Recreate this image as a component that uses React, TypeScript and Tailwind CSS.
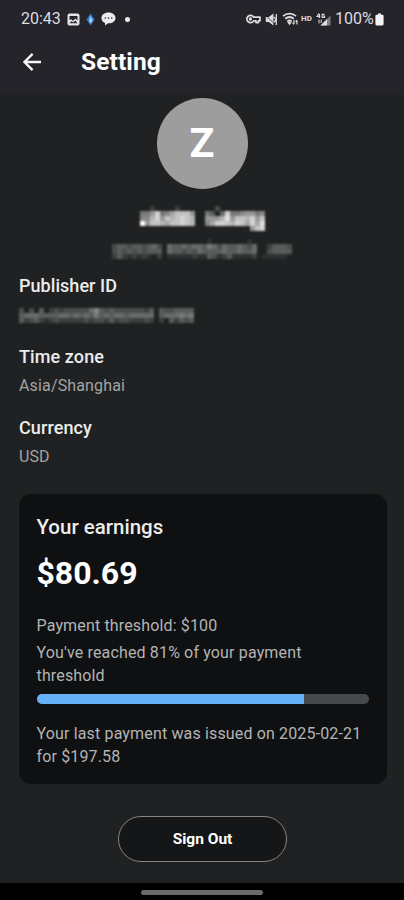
import React from 'react';

const EARNINGS = 80.69;
const THRESHOLD = 100;

// Brightness of each block as a hex digit, one string per row
const NAME_ROWS = [
    '0020000200000003000000000',
    '668c679bbb8006405c6678867',
    '77ac8babcba00888ad8bbac8b',
    'f8bba9bbcba0079ccbacb9c9d',
    '00000000000000000000008bc',
];

const EMAIL_ROWS = [
    '000000000000000000010000000100000000',
    '344344345305445455465354454350024443',
    '343434344405443435444454454450034444',
    '242121210201111121143124111120111110',
];

const PUBLISHER_ROWS = [
    '30304023233333574343333332404334444',
    '45554444554545464545545555504555656',
    '42342123222223233242332223202042434',
];

const Mosaic: React.FC<{ rows: string[]; cell: number; className?: string }> = ({ rows, cell, className }) => {
    const width = rows[0].length * cell;
    const height = rows.length * cell;
    return (
        <svg width={width} height={height} viewBox={`0 0 ${width} ${height}`} className={className} aria-hidden="true">
            {rows.map((row, y) =>
                row.split('').map((level, x) => (
                    <rect
                        key={`${x}-${y}`}
                        x={x * cell}
                        y={y * cell}
                        width={cell}
                        height={cell}
                        fill="#fff"
                        fillOpacity={parseInt(level, 16) / 15}
                    />
                ))
            )}
        </svg>
    );
};

const StatusBar: React.FC = () => (
    <div className="flex h-[38px] items-center justify-between pl-[21px] pr-[20px] text-[#dcdce0]">
        <div className="flex items-center">
            <span className="w-[46px] text-[16px] leading-none">20:43</span>
            {/* Picture */}
            <svg width="13" height="13" viewBox="0 0 13 13" className="mr-[5px]">
                <rect x="0.5" y="0.5" width="12" height="12" rx="2" fill="#e4e4e6" />
                <path d="M2.5 7V3h8v4.5L8.3 5.6 6 7.9 4.3 6.2z" fill="#25242a" />
                <path d="M2.5 10.2 4.5 8.2l1.6 1.4 2.3-2.2 2.1 2.8z" fill="#25242a" />
            </svg>
            {/* App notification */}
            <svg width="9" height="13" viewBox="0 0 9 13" className="mr-[6px] ml-[1px]">
                <path d="M4.5 0.5 8.5 6.5 4.5 12.5 0.5 6.5z" fill="#2f7fd6" />
                <path d="M4.5 3 6.8 7.5 4.5 10.5 3 7.5z" fill="#a5cdf5" />
            </svg>
            {/* Message */}
            <svg width="15" height="14" viewBox="0 0 15 14" className="mr-[9px]">
                <path d="M7.5 0.5C3.5 0.5 0.5 2.8 0.5 6s2 4.3 3.5 5v2.4l3-2.1h0.8c3.8 0 6.7-2.2 6.7-5.3S11.5 0.5 7.5 0.5z" fill="#ececee" />
                <circle cx="4.3" cy="6" r="0.8" fill="#25242a" />
                <circle cx="7.5" cy="6" r="0.8" fill="#25242a" />
                <circle cx="10.7" cy="6" r="0.8" fill="#25242a" />
            </svg>
            <span className="h-[5px] w-[5px] rounded-full bg-[#ececee]" />
        </div>

        <div className="flex items-center">
            {/* VPN key */}
            <svg width="15" height="10" viewBox="0 0 15 10" className="mr-[4px]" fill="none" stroke="#dcdce0" strokeWidth="1.7">
                <path d="M7.6 3.2A3.6 3.6 0 1 0 7.6 6.8H10v1.8h2.4V6.8H14V3.2z" strokeLinejoin="round" />
                <circle cx="4.4" cy="5" r="0.8" />
            </svg>
            {/* Muted */}
            <svg width="13" height="13" viewBox="0 0 13 13" className="mr-[4px]">
                <path d="M0.8 4h3L8.4 0.6v11.8L3.8 9h-3z" fill="#dcdce0" />
                <path d="M0.5 2l10 10" stroke="#25242a" strokeWidth="0.8" />
                <path d="M11.3 1v11M8.5 4l2.8 2.5-2.8 3" fill="none" stroke="#dcdce0" strokeWidth="1.3" />
            </svg>
            {/* Wi-Fi */}
            <svg width="17" height="14" viewBox="0 0 17 14" className="mr-[2px]" fill="none" stroke="#dcdce0" strokeWidth="1.8">
                <path d="M1 4.2c3.8-3.4 9.2-3.4 13 0M3.2 6.8c2.6-2.2 6-2.2 8.6 0M5.5 9.2c1.3-1 2.7-1 4 0" />
                <path d="M7.5 11.8l-1-1.4h2z" fill="#dcdce0" />
                <path d="M12 8v4M10.6 10.8l1.4 1.6M15 12.5v-4M13.7 9.8L15 8.2" strokeWidth="1.2" />
            </svg>
            <span className="mr-[2px] w-[13px] text-[8px] font-bold leading-none">HD</span>
            {/* Mobile signal */}
            <svg width="15" height="13" viewBox="0 0 15 13" className="mr-[4px]">
                <path d="M4.5 12.5 14.5 2.5v10z" fill="#7c7c82" />
                <path d="M4.5 12.5 11 6v6.5z" fill="#dcdce0" />
                <path d="M3 0.5 1 3.5h3.2M3.4 1v4M8.5 1.3H6.2v3.2h2.3V3H7.3" fill="none" stroke="#dcdce0" strokeWidth="1.2" />
                <path d="M3 6.5v4M5.2 10V6.5" stroke="#dcdce0" fill="none" />
            </svg>
            <span className="mr-[1px] w-[39px] whitespace-nowrap text-[16px] leading-none">100%</span>
            {/* Battery */}
            <svg width="9" height="13" viewBox="0 0 9 13">
                <path d="M3 0.5h3v1.3h1.3a1.3 1.3 0 0 1 1.3 1.3v8a1.3 1.3 0 0 1-1.3 1.3H1.7a1.3 1.3 0 0 1-1.3-1.3v-8a1.3 1.3 0 0 1 1.3-1.3H3z" fill="#f4f4f5" />
            </svg>
        </div>
    </div>
);

const App: React.FC = () => {
    const progress = Math.ceil((EARNINGS / THRESHOLD) * 100);

    return (
        <div className="flex h-[900px] w-[404px] flex-col overflow-hidden bg-[#1f2122] font-['Roboto',sans-serif] text-white">
            {/* Header */}
            <header className="h-[95px] shrink-0 bg-[#25242a]">
                <StatusBar />
                <div className="flex h-[48px] items-center pl-[23px]">
                    <button className="mr-[40px]" aria-label="Back">
                        <svg width="18" height="18" viewBox="0 0 18 18" fill="none" stroke="#f4f4f5" strokeWidth="2.4">
                            <path d="M18 9H2M9.6 0.9 1.5 9l8.1 8.1" />
                        </svg>
                    </button>
                    <h1 className="text-[24.5px] font-bold leading-none tracking-[0.1px]">Setting</h1>
                </div>
            </header>

            {/* Profile */}
            <div className="flex shrink-0 flex-col items-center pt-[3px]">
                <div className="flex h-[91px] w-[91px] items-center justify-center rounded-full bg-[#9d9d9d]">
                    <span className="text-[41px] font-bold leading-none">Z</span>
                </div>
                <Mosaic rows={NAME_ROWS} cell={5} className="mt-[17px] blur-[0.8px]" />
                <Mosaic rows={EMAIL_ROWS} cell={5} className="mt-[8px] blur-[0.8px]" />
            </div>

            {/* Account info */}
            <div className="shrink-0 px-[19px] pt-[16px] text-[#ececec]">
                <h2 className="text-[18px] font-medium leading-[22px] tracking-[0.05px]">Publisher ID</h2>
                <Mosaic rows={PUBLISHER_ROWS} cell={5} className="mt-[11px] blur-[0.8px]" />
                <h2 className="mt-[23px] text-[18px] font-medium leading-[22px] tracking-[0.1px]">Time zone</h2>
                <p className="mt-[8px] text-[16px] leading-[20px] tracking-[0.15px] text-[#a3a3a3]">Asia/Shanghai</p>
                <h2 className="mt-[21px] text-[18px] font-medium leading-[22px] tracking-[0.1px]">Currency</h2>
                <p className="mt-[8px] text-[16px] leading-[20px] text-[#a3a3a3]">USD</p>
            </div>

            {/* Earnings */}
            <section className="ml-[18.5px] mr-[17.5px] mt-[27px] h-[290px] shrink-0 rounded-[12px] bg-[#0f1011] px-[18px] pt-[20px] text-[16px] tracking-[0.15px] text-[#b4b4b4]">
                <h2 className="text-[20.5px] font-medium leading-[26px] tracking-normal text-[#ececec]">Your earnings</h2>
                <p className="mt-[14px] text-[32px] font-bold leading-[38px] tracking-normal text-white">${EARNINGS}</p>
                <p className="mt-[23px] leading-[22px]">Payment threshold: ${THRESHOLD}</p>
                <p className="mt-[5px] leading-[22.5px]">
                    You've reached {progress}% of your payment
                    <br />
                    threshold
                </p>
                <div className="mt-[7px] h-[10px] overflow-hidden rounded-full bg-[#474849]">
                    <div className="h-full bg-[#64b1f7]" style={{ width: `${EARNINGS}%` }} />
                </div>
                <p className="mt-[19px] whitespace-nowrap leading-[22.5px]">
                    Your last payment was issued on 2025-02-21
                    <br />
                    for $197.58
                </p>
            </section>

            <button className="ml-[118px] mt-[32px] h-[46px] w-[169px] shrink-0 rounded-full border-[1.5px] border-[#858585] bg-[#151617] pt-[1px] text-[15.5px] font-bold">
                Sign Out
            </button>

            {/* Gesture bar */}
            <div className="mt-auto flex h-[17px] shrink-0 justify-center bg-black pt-[7px]">
                <div className="h-[5px] w-[122px] rounded-full bg-[#6b6b6d]" />
            </div>
        </div>
    );
};

export default App;
